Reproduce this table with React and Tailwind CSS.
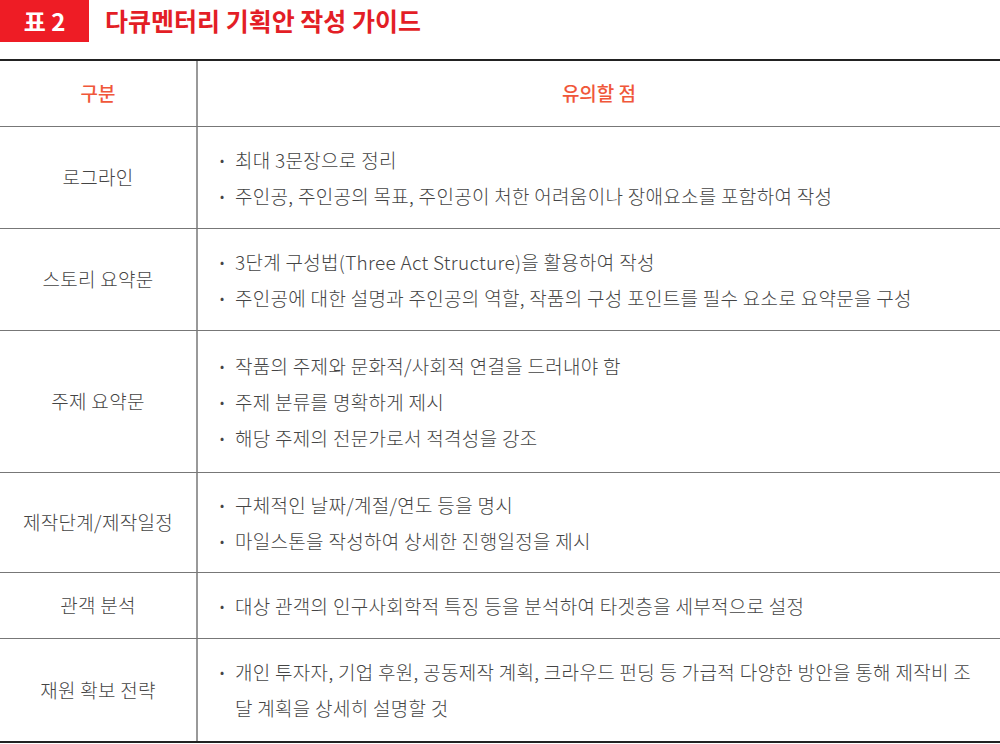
import React from 'react';

const rows = [
  { label: '로그라인', h: 'h-[102px]', items: ['최대 3문장으로 정리', '주인공, 주인공의 목표, 주인공이 처한 어려움이나 장애요소를 포함하여 작성'] },
  { label: '스토리 요약문', h: 'h-[102px]', items: ['3단계 구성법(Three Act Structure)을 활용하여 작성', '주인공에 대한 설명과 주인공의 역할, 작품의 구성 포인트를 필수 요소로 요약문을 구성'] },
  { label: '주제 요약문', h: 'h-[142px]', items: ['작품의 주제와 문화적/사회적 연결을 드러내야 함', '주제 분류를 명확하게 제시', '해당 주제의 전문가로서 적격성을 강조'] },
  { label: '제작단계/제작일정', h: 'h-[100px]', items: ['구체적인 날짜/계절/연도 등을 명시', '마일스톤을 작성하여 상세한 진행일정을 제시'] },
  { label: '관객 분석', h: 'h-[66px]', items: ['대상 관객의 인구사회학적 특징 등을 분석하여 타겟층을 세부적으로 설정'] },
  { label: '재원 확보 전략', h: 'h-[102px]', items: ['개인 투자자, 기업 후원, 공동제작 계획, 크라우드 펀딩 등 가급적 다양한 방안을 통해 제작비 조달 계획을 상세히 설명할 것'] },
];

const App = () => {
  return (
    <div className="w-[1000px] h-[744px] bg-white font-['Noto_Sans_CJK_KR',sans-serif] text-[#444]">
      {/* Title */}
      <div className="flex items-center h-[42px]">
        <div className="w-[89px] h-[42px] bg-[#ee1c25] flex items-center justify-center text-white text-[24px] font-bold">
          표 2
        </div>
        <h1 className="ml-[16px] text-[#e31e26] text-[25px] font-bold">다큐멘터리 기획안 작성 가이드</h1>
      </div>

      {/* Table */}
      <div className="mt-[17px] border-t-2 border-b-2 border-[#222]">
        <div className="grid grid-cols-[198px_1fr] h-[66px] border-b border-[#777] text-[#f0573a] text-[19px] font-medium">
          <div className="flex items-center justify-center border-r-2 border-[#999]">구분</div>
          <div className="flex items-center justify-center">유의할 점</div>
        </div>
        {rows.map((r, i) => (
          <div
            key={r.label}
            className={`grid grid-cols-[198px_1fr] ${r.h} ${i < rows.length - 1 ? 'border-b border-[#777]' : ''} text-[19px] font-light tracking-[0.3px]`}
          >
            <div className="flex items-center justify-center border-r-2 border-[#999]">{r.label}</div>
            <ul className="flex flex-col justify-center pl-[22px] pr-[16px]">
              {r.items.map((t) => (
                <li key={t} className="flex leading-[36px]">
                  <span className="w-[15px] shrink-0 text-[13px]">•</span>
                  <span>{t}</span>
                </li>
              ))}
            </ul>
          </div>
        ))}
      </div>
    </div>
  );
};

export default App;
